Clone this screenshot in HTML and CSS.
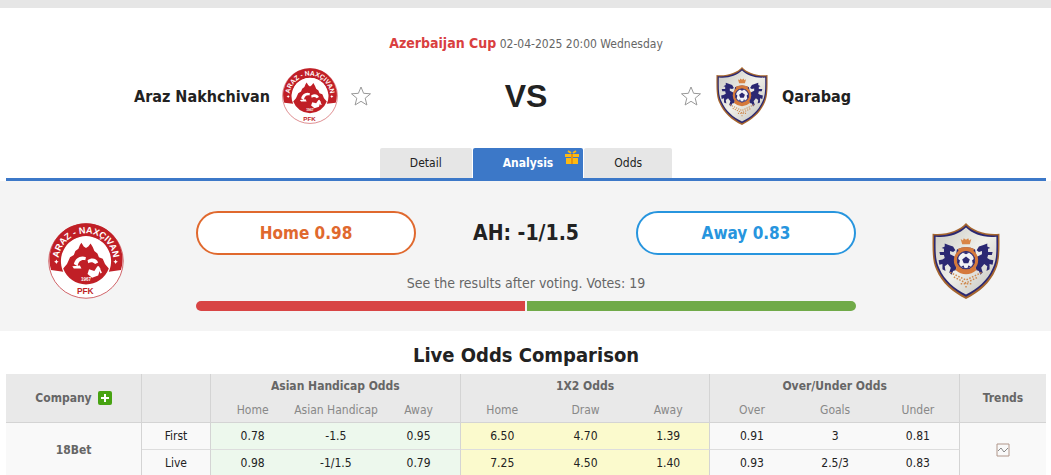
FILE: index.html
```html
<!DOCTYPE html>
<html lang="en">
<head>
  <meta charset="UTF-8" />
  <meta name="viewport" content="width=device-width, initial-scale=1.0" />
  <title>Araz Nakhchivan VS Qarabag</title>
  <link rel="stylesheet" href="styles.css">
</head>
<body>
  <!-- Shared drawings -->
  <svg class="defs" aria-hidden="true">
    <linearGradient id="silver" x1="0" y1="0" x2="1" y2="1">
      <stop offset="0" stop-color="#c9c9c4" />
      <stop offset="0.5" stop-color="#f0f0ea" />
      <stop offset="1" stop-color="#bfbfba" />
    </linearGradient>
    <symbol id="qarabag" viewBox="0 0 90 100">
      <path d="M45 0 C37 10 18 16 1 14 C1 32 0 50 6 62 C13 79 28 92 45 100 C62 92 77 79 84 62 C90 50 89 32 89 14 C72 16 53 10 45 0 Z" fill="#a5652e" />
      <path d="M45 3 C37 12 18 18 3 16 C3 34 2 49 8 61 C15 77 29 89 45 97 C61 89 75 77 82 61 C88 49 87 34 87 16 C72 18 53 12 45 3 Z" fill="#2b2872" />
      <path d="M45 6 C36 15 20 20 5 18 C5 35 4 48 10 60 C17 76 30 87 45 94 C60 87 73 76 80 60 C86 48 85 35 85 18 C70 20 54 15 45 6 Z" fill="url(#silver)" />
      <path d="M38 21 l3 2 1 -3 3 2 3 -2 1 3 3 -2 -2 7 h-10z" fill="#d98545" />
      <path id="horse" d="M17 27 L22 29 L28 31 L31 36 L28 38 L24 37 L24 41 L30 44 L34 48 L32 62 L28 63 L26 68 L23 65 L25 59 L21 54 L17 57 L18 63 L14 61 L14 54 L10 55 L9 49 L14 48 L17 46 L16 42 L11 42 L10 38 L16 38 L16 34 L13 33 L17 31 Z" fill="#2b2872" />
      <use href="#horse" transform="translate(90 0) scale(-1 1)" />
      <path d="M33 35 Q45 29 57 35 L59 48 L56 62 Q45 70 34 62 L31 48 Z" fill="#2b2872" />
      <circle cx="45" cy="49" r="14" fill="none" stroke="#d5793b" stroke-width="4" />
      <path d="M35 36 Q45 31 55 36 M32 60 Q45 71 58 60" fill="none" stroke="#d5793b" stroke-width="4" />
      <circle cx="45" cy="49" r="11" fill="#f2f2f5" stroke="#2b2872" stroke-width="1" />
      <path d="M45 44 l5 4 -2 5 h-6 l-2 -5z M41 39 l4 2 4 -2 -4 -1z M34 47 l3 2 -1 5 -2 -2z M56 47 l-3 2 1 5 2 -2z M39 57 l3 -1 1 4z M51 57 l-3 -1 -1 4z" fill="#2b2872" />
      <path d="M24 65 L45 75 L66 65 M29 71 L45 79 L61 71 M38 80 H53 M44 84 H47" fill="none" stroke="#cf8a50" stroke-width="2" stroke-dasharray="2 2" />
    </symbol>

    <symbol id="star" viewBox="0 0 22 22">
      <path d="M11 2 L13.6 8.3 L20.5 8.8 L15.2 13.2 L16.9 20 L11 16.3 L5.1 20 L6.8 13.2 L1.5 8.8 L8.4 8.3 Z" fill="#fff" stroke="#999" />
    </symbol>
  </svg>

  <header class="match">
    <p class="league"><a href="#league">Azerbaijan Cup</a> <span>02-04-2025 20:00 Wednesday</span></p>
    <div class="teams">
      <div class="team home">
        <a href="#home">Araz Nakhchivan</a>
        <svg class="logo" viewBox="0 0 100 100" role="img" aria-label="Araz Nakhchivan">
          <g id="araz">
            <circle cx="50" cy="50" r="49" fill="#fff" stroke="#c4353b" stroke-width="1" />
            <path d="M4 62 A48 48 0 1 1 96 62 L80 64 A33 33 0 1 0 20 64 Z" fill="#c01f26" />
            <circle cx="50" cy="50" r="32" fill="#fff" />
            <path id="arazArc" d="M15 58 A36 36 0 1 1 85 58" fill="none" />
            <path d="M20 60 L25 54 L29 45 L34 42 L36 37 L40 34 L42 29 L44 26 L47 31 L50 33 L53 31 L56 27 L59 32 L61 37 L65 40 L67 45 L72 47 L75 54 L80 60 A32 32 0 0 1 20 60 Z" fill="#c01f26" />
            <path d="M34 54 C36 46 43 42 50 45 L49 49 C43 48 40 51 39 57 Z M32 57 L42 56 L44 60 L34 60 Z M52 49 C58 45 64 47 66 52 L62 54 C59 51 56 51 53 53 Z" fill="#fff" />
            <path d="M54 61 L61 63 L65 57 L69 60 L66 69 L58 72 L52 67 Z" fill="#fff" />
            <path d="M66 57 L70 66" stroke="#fff" stroke-width="2" />
            <text x="50" y="76" class="crest-year">1967</text>
            <text x="49" y="94" class="crest-pfk">PFK</text>
            <path d="M11 48 l1 2 2 1 -2 1 -1 2 -1 -2 -2 -1 2 -1z M89 48 l1 2 2 1 -2 1 -1 2 -1 -2 -2 -1 2 -1z" fill="#fff" />
            <text class="crest-name"><textPath href="#arazArc" startOffset="50%">ARAZ - NAXÇIVAN</textPath></text>
          </g>
        </svg>
        <button class="fav" aria-label="Follow Araz Nakhchivan"><svg><use href="#star" /></svg></button>
      </div>
      <div class="vs">VS</div>
      <div class="team">
        <button class="fav" aria-label="Follow Qarabag"><svg><use href="#star" /></svg></button>
        <svg class="logo" role="img" aria-label="Qarabag"><use href="#qarabag" /></svg>
        <a href="#away">Qarabag</a>
      </div>
    </div>
    <nav class="tabs">
      <a href="#detail">Detail</a>
      <a href="#analysis" class="active">Analysis
        <svg class="gift" viewBox="0 0 14 14" aria-hidden="true">
          <path d="M0 4 H14 V7 H0 Z M1 8 H6 V14 H1 Z M8 8 H13 V14 H8 Z" fill="#fdb913" />
          <path d="M6 4 H8 V14 H6 Z" fill="#e8930c" />
          <path d="M6 3 L3 1 M8 3 L11 1" stroke="#fdb913" stroke-width="2" />
        </svg>
      </a>
      <a href="#odds">Odds</a>
    </nav>
  </header>

  <!-- Vote -->
  <section class="vote">
    <div class="crest"><svg viewBox="0 0 100 100" role="img" aria-label="Araz Nakhchivan"><use href="#araz" /></svg></div>
    <div class="poll">
      <div class="choices">
        <button class="pick pick-home">Home 0.98</button>
        <strong>AH: -1/1.5</strong>
        <button class="pick pick-away">Away 0.83</button>
      </div>
      <p>See the results after voting. Votes: 19</p>
      <div class="bar"><span class="bar-home"></span><span class="bar-away"></span></div>
    </div>
    <div class="crest"><svg role="img" aria-label="Qarabag"><use href="#qarabag" /></svg></div>
  </section>

  <!-- Odds table -->
  <section class="odds">
    <h2>Live Odds Comparison</h2>
    <table>
      <colgroup>
        <col class="col-company"><col class="col-type">
        <col span="9">
        <col class="col-trends">
      </colgroup>
      <thead>
        <tr>
          <th rowspan="2">
            <span class="company">Company
              <button class="add" aria-label="Add company"><svg viewBox="0 0 14 14"><path d="M7 3 V11 M3 7 H11" stroke="#fff" stroke-width="2" /></svg></button>
            </span>
          </th>
          <th rowspan="2"></th>
          <th colspan="3">Asian Handicap Odds</th>
          <th colspan="3">1X2 Odds</th>
          <th colspan="3">Over/Under Odds</th>
          <th rowspan="2">Trends</th>
        </tr>
        <tr class="sub">
          <th>Home</th><th>Asian Handicap</th><th class="end">Away</th>
          <th>Home</th><th>Draw</th><th class="end">Away</th>
          <th>Over</th><th>Goals</th><th class="end">Under</th>
        </tr>
      </thead>
      <tbody>
        <tr>
          <th rowspan="2" class="end">18Bet</th>
          <td class="end">First</td>
          <td class="ah">0.78</td><td class="ah">-1.5</td><td class="ah end">0.95</td>
          <td class="x2">6.50</td><td class="x2">4.70</td><td class="x2 end">1.39</td>
          <td>0.91</td><td>3</td><td class="end">0.81</td>
          <td rowspan="2">
            <a href="#trends" aria-label="Trends"><svg class="trend" viewBox="0 0 14 14"><path d="M1 1 H13 V13 H1 Z" stroke="#b0968a" /><path d="M2 8 L5 5 L8 9 L12 5" stroke="#888" /></svg></a>
          </td>
        </tr>
        <tr>
          <td class="end">Live</td>
          <td class="ah">0.98</td><td class="ah">-1/1.5</td><td class="ah end">0.79</td>
          <td class="x2">7.25</td><td class="x2">4.50</td><td class="x2 end">1.40</td>
          <td>0.93</td><td>2.5/3</td><td class="end">0.83</td>
        </tr>
      </tbody>
    </table>
  </section>
</body>
</html>
```
FILE: styles.css
```css
* {
  box-sizing: border-box;
}
body {
  margin: 0;
  border-top: 8px solid #e6e6e6;
  background: #fff;
  color: #222;
  font-family: Tahoma, "DejaVu Sans Condensed", "DejaVu Sans", sans-serif;
  font-size: 12px;
}
a {
  color: inherit;
  text-decoration: none;
}
p, h2 {
  margin: 0;
}
button {
  padding: 0;
  border: 0;
  background: none;
  font: inherit;
  cursor: pointer;
}
svg {
  display: block;
}
.defs {
  position: absolute;
  width: 0;
  height: 0;
}

/* Match header */
.match {
  margin: 0 5px 0 6px;
  padding-top: 25px;
  border-bottom: 3px solid #3c78c8;
}
.league {
  line-height: 20px;
  text-align: center;
  color: #666;
}
.league a {
  color: #d9403f;
  font-size: 14px;
  font-weight: bold;
}
.teams {
  display: grid;
  grid-template-columns: 1fr 308px 1fr;
  align-items: center;
  margin-top: 13px;
}
.team {
  display: flex;
  align-items: center;
  gap: 12px;
  font-size: 16px;
  font-weight: bold;
}
.home {
  justify-content: flex-end;
}
.logo {
  width: 56px;
  height: 58px;
}
.fav svg {
  width: 22px;
  height: 22px;
}
.vs {
  text-align: center;
  font-family: Arial, "Liberation Sans", sans-serif;
  font-size: 32px;
  font-weight: bold;
}
.tabs {
  display: flex;
  justify-content: center;
  gap: 1px;
  margin-top: 23px;
  line-height: 30px;
}
.tabs a {
  padding: 0 30px;
  background: #e6e6e6;
  border-radius: 2px 2px 0 0;
}
.tabs .active {
  position: relative;
  background: #3c78c8;
  color: #fff;
  font-weight: bold;
}
.gift {
  position: absolute;
  top: 2px;
  right: 4px;
  width: 14px;
  height: 14px;
}

/* Vote */
.vote {
  display: flex;
  align-items: center;
  gap: 30px;
  height: 150px;
  padding: 0 5px 0 6px;
  background: #f4f4f4;
}
.crest {
  width: 160px;
  padding-top: 10px;
}
.crest svg {
  width: 76px;
  height: 76px;
  margin: 0 auto;
}
.poll {
  flex: 1;
  padding-top: 10px;
  text-align: center;
  color: #666;
  font-size: 14px;
}
.poll p {
  margin: 18px 0 8px;
  line-height: 20px;
}
.choices {
  display: grid;
  grid-template-columns: 1fr 1fr 1fr;
  align-items: center;
}
.choices strong {
  color: #222;
  font-size: 21px;
}
.pick {
  height: 44px;
  border: 2px solid;
  border-radius: 22px;
  background: #fff;
  font-size: 17px;
  font-weight: bold;
}
.pick-home {
  color: #e0692e;
}
.pick-away {
  color: #2795de;
}
.bar {
  display: flex;
  gap: 2px;
  height: 10px;
  border-radius: 5px;
  overflow: hidden;
}
.bar span {
  flex: 1;
}
.bar-home {
  background: #d84444;
}
.bar-away {
  background: #70aa48;
}

/* Odds table */
.odds {
  margin: 0 5px 0 6px;
}
.odds h2 {
  padding: 9px 0 4px;
  font-size: 20px;
  line-height: 30px;
  text-align: center;
}
table {
  width: 100%;
  border-collapse: separate;
  border-spacing: 0;
  table-layout: fixed;
}
.col-company {
  width: 136px;
}
.col-type {
  width: 69px;
}
.col-trends {
  width: 86px;
}
th, td {
  height: 27px;
  padding: 0;
  border-bottom: 1px solid #ddd;
  background: #f9f9f9;
  text-align: center;
  white-space: nowrap;
}
th {
  color: #666;
}
thead th {
  height: 24px;
  border-right: 1px solid #d4d4d4;
  border-bottom: 0;
  background: #e9e9e9;
}
thead th[rowspan], thead .sub th {
  border-bottom: 1px solid #d4d4d4;
}
thead .sub th {
  height: 25px;
  border-right: 0;
  color: #888;
  font-weight: normal;
}
thead th:last-child {
  border-right: 0;
}
thead .sub .end, .end {
  border-right: 1px solid #d4d4d4;
}
.ah {
  background: #edf8ed;
}
.x2 {
  background: #fbfacd;
}
.company {
  display: flex;
  align-items: center;
  justify-content: center;
  gap: 6px;
}
.add {
  width: 14px;
  height: 14px;
  border-radius: 2px;
  background: #47a312;
}
.trend {
  width: 14px;
  height: 14px;
  margin: 0 auto;
  fill: none;
}

/* Crest lettering */
.crest-name, .crest-year, .crest-pfk {
  font-family: "Liberation Sans", sans-serif;
  font-weight: bold;
  text-anchor: middle;
}
.crest-name {
  fill: #fff;
  font-size: 12px;
}
.crest-year {
  fill: #fff;
  font-size: 6px;
}
.crest-pfk {
  fill: #c01f26;
  font-size: 11px;
}
```
